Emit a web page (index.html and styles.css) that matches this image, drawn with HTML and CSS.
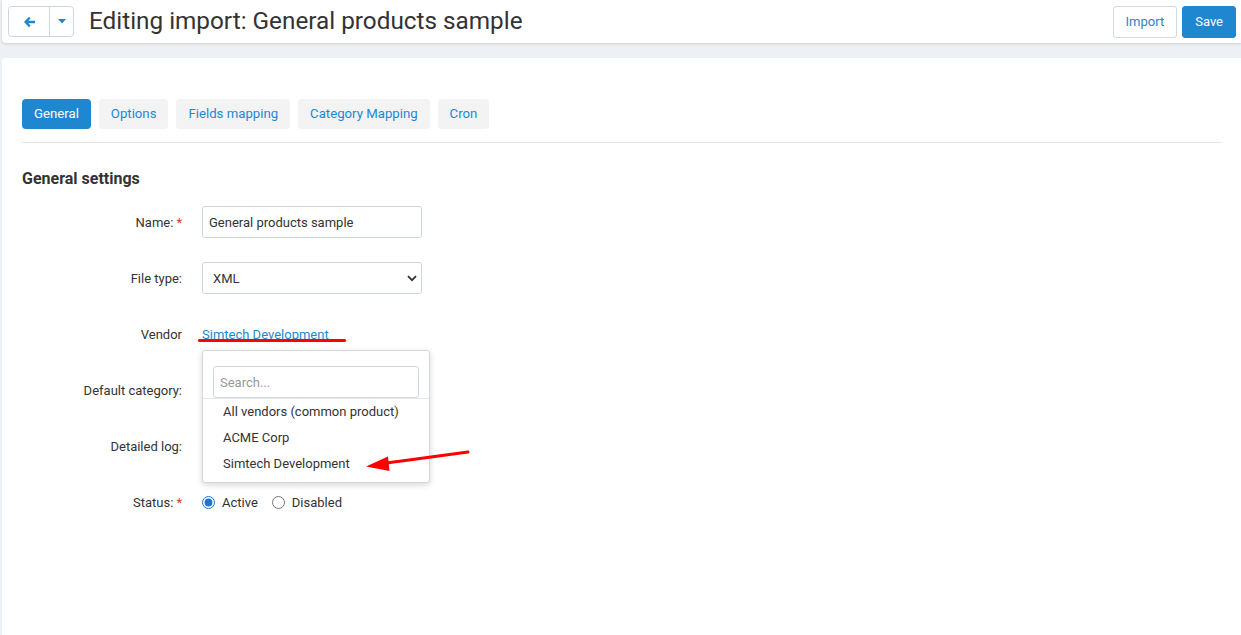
FILE: index.html
```html
<!DOCTYPE html>
<html lang="en">
<head>
    <meta charset="UTF-8">
    <meta name="viewport" content="width=device-width, initial-scale=1.0">
    <title>Editing import: General products sample</title>
    <link rel="stylesheet" href="styles.css">
</head>
<body>
    <div class="header">
        <div class="btn-group">
            <button class="btn-back">
                <svg width="13" height="12" viewBox="0 0 13 12"><path d="M6 0.8 L1 6 L6 11.2 L7.6 9.6 L5.3 7.3 H12 V4.7 H5.3 L7.6 2.4 Z" fill="#1e87d0"/></svg>
            </button>
            <button class="btn-caret">
                <svg width="8" height="5" viewBox="0 0 8 5"><path d="M0 0 H8 L4 4.5 Z" fill="#1e87d0"/></svg>
            </button>
        </div>
        <h1 class="title">Editing import: General products sample</h1>
        <div class="actions">
            <button class="btn">Import</button>
            <button class="btn btn-primary">Save</button>
        </div>
    </div>

    <div class="panel">
        <div class="tabs">
            <a class="tab active">General</a>
            <a class="tab">Options</a>
            <a class="tab">Fields mapping</a>
            <a class="tab">Category Mapping</a>
            <a class="tab">Cron</a>
        </div>

        <h2 class="section-title">General settings</h2>

        <div class="form-row">
            <label class="form-label">Name:<span class="req">*</span></label>
            <div class="form-control">
                <input class="input" type="text" value="General products sample">
            </div>
        </div>

        <div class="form-row">
            <label class="form-label">File type:</label>
            <div class="form-control select-wrap">
                <select class="input select">
                    <option>XML</option>
                    <option>CSV</option>
                </select>
                <svg class="chevron" width="10" height="7" viewBox="0 0 10 7"><path d="M1 1.2 L5 5.2 L9 1.2" fill="none" stroke="#333" stroke-width="1.8"/></svg>
            </div>
        </div>

        <div class="form-row">
            <label class="form-label">Vendor</label>
            <div class="form-control vendor">
                <a class="link">Simtech Development</a>
                <span class="mark-line"></span>

                <div class="dropdown">
                    <div class="dropdown-search">
                        <input class="input" type="text" placeholder="Search...">
                    </div>
                    <ul class="dropdown-list">
                        <li>All vendors (common product)</li>
                        <li>ACME Corp</li>
                        <li>Simtech Development</li>
                    </ul>
                </div>

                <svg class="mark-arrow" width="110" height="27" viewBox="0 0 110 27">
                    <line x1="22" y1="17.5" x2="107" y2="6" stroke="#f00" stroke-width="3" stroke-linecap="round"/>
                    <path d="M5 20.5 L27 10.5 L28.5 25 Z" fill="#f00"/>
                </svg>
            </div>
        </div>

        <div class="form-row">
            <label class="form-label">Default category:</label>
            <div class="form-control"></div>
        </div>

        <div class="form-row">
            <label class="form-label">Detailed log:</label>
            <div class="form-control">
                <input type="checkbox">
            </div>
        </div>

        <div class="form-row">
            <label class="form-label">Status:<span class="req">*</span></label>
            <div class="form-control radios">
                <label class="radio"><input type="radio" name="status" checked> Active</label>
                <label class="radio"><input type="radio" name="status"> Disabled</label>
            </div>
        </div>
    </div>
</body>
</html>
```

FILE: styles.css
```css
body {
    margin: 0;
    background-color: #edf1f4;
    font-family: Roboto, "Liberation Sans", Arial, sans-serif;
    font-size: 13px;
    color: #333;
    height: 635px;
    overflow: hidden;
}
.header {
    display: flex;
    align-items: center;
    height: 43px;
    margin-left: 2px;
    padding: 0 5px 0 6px;
    background: #fff;
    border-bottom-left-radius: 4px;
    box-shadow: 0 1px 3px rgba(0, 0, 0, 0.14);
}
.btn-group {
    display: flex;
    height: 31px;
    border: 1px solid #cdd5dc;
    border-radius: 4px;
    box-sizing: border-box;
}
.btn-group button {
    background: #fff;
    border: none;
    padding: 0;
    display: flex;
    align-items: center;
    justify-content: center;
    border-radius: 4px;
}
.btn-back {
    width: 40px;
}
.btn-caret {
    width: 24px;
    border-left: 1px solid #cdd5dc !important;
    border-radius: 0 4px 4px 0 !important;
}
.title {
    margin: 0 0 0 15px;
    font-size: 24.3px;
    font-weight: 400;
    color: #333;
    flex: 1;
    line-height: 1;
    padding-bottom: 1px;
}
.actions {
    display: flex;
    gap: 5px;
}
.btn {
    height: 32px;
    padding: 0 12px;
    font-family: inherit;
    font-size: 13px;
    color: #1e87d0;
    background: #fff;
    border: 1px solid #d3d9de;
    border-radius: 3px;
}
.btn-primary {
    background: #1e87d0;
    border-color: #1e87d0;
    color: #fff;
}
.panel {
    margin: 15px 0 0 2px;
    padding: 41px 19px 0 20px;
    background: #fff;
    border-top-left-radius: 4px;
    height: 536px;
}
.tabs {
    display: flex;
    gap: 8px;
    padding-bottom: 13px;
    border-bottom: 1px solid #e3e7eb;
}
.tab {
    height: 30px;
    line-height: 30px;
    padding: 0 12px;
    font-size: 13.2px;
    background: #f3f3f3;
    color: #1e87d0;
    border-radius: 4px;
}
.tab.active {
    background: #1e87d0;
    color: #fff;
}
.section-title {
    margin: 26px 0 17px;
    font-size: 16px;
    font-weight: 700;
    line-height: 20px;
    color: #333;
}
.form-row {
    display: flex;
    align-items: center;
    height: 32px;
    margin-bottom: 24px;
}
.form-label {
    width: 180px;
    padding-right: 20px;
    box-sizing: border-box;
    text-align: right;
    color: #333;
}
.req {
    color: #e0352b;
    margin-left: 3px;
}
.form-control {
    position: relative;
    display: flex;
    align-items: center;
    height: 32px;
}
.input {
    width: 220px;
    height: 32px;
    box-sizing: border-box;
    padding: 0 6px;
    border: 1px solid #cfd6dc;
    border-radius: 3px;
    font-family: inherit;
    font-size: 13px;
    color: #333;
    background: #fff;
}
.input::placeholder {
    color: #999;
}
.select {
    appearance: none;
    padding-left: 10px;
}
.chevron {
    position: absolute;
    right: 5px;
    top: 13px;
}
.link {
    color: #1e87d0;
}
.mark-line {
    position: absolute;
    left: -4px;
    top: 21px;
    width: 148px;
    height: 3px;
    background: #f00;
    border-radius: 2px;
}
.dropdown {
    position: absolute;
    left: 0;
    top: 32px;
    width: 228px;
    box-sizing: border-box;
    background: #fff;
    border: 1px solid #d2d7dc;
    border-radius: 3px;
    box-shadow: 0 2px 6px rgba(0, 0, 0, 0.16);
    z-index: 2;
}
.dropdown-search {
    padding: 15px 10px 0;
    border-bottom: 1px solid #e3e7eb;
}
.dropdown-search .input {
    width: 206px;
    padding: 0 6px;
}
.dropdown-list {
    list-style: none;
    margin: 0;
    padding: 0 0 5px;
}
.dropdown-list li {
    height: 26px;
    line-height: 26px;
    padding-left: 20px;
}
.mark-arrow {
    position: absolute;
    left: 159px;
    top: 128px;
    z-index: 3;
}
.radios {
    gap: 14px;
}
.radio {
    display: flex;
    align-items: center;
    gap: 7px;
}
.radio input {
    margin: 0;
    width: 13px;
    height: 13px;
    accent-color: #1e74d0;
}
```
